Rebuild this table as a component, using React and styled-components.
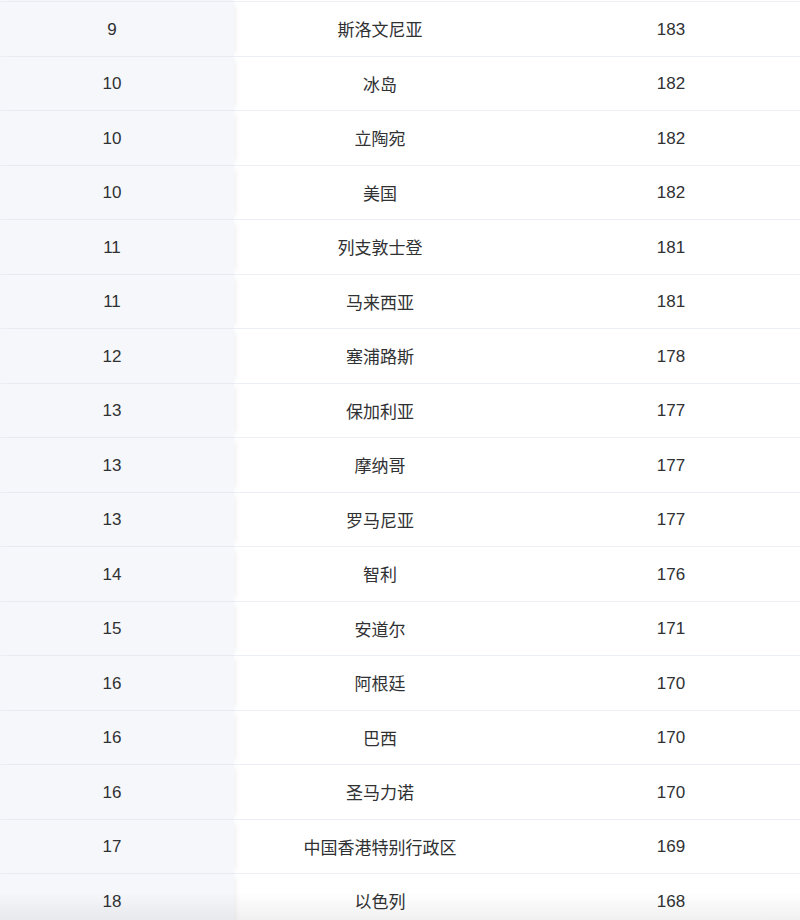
import React from "react";
import styled, { createGlobalStyle } from "styled-components";

const Global = createGlobalStyle`
  * { box-sizing: border-box; margin: 0; padding: 0; }
  html, body { background: #fff; overflow: hidden; }
  body { font-family: "Liberation Sans", "Noto Sans CJK SC", sans-serif; }
`;

const rows = [
  [9, "斯洛文尼亚", 183],
  [10, "冰岛", 182],
  [10, "立陶宛", 182],
  [10, "美国", 182],
  [11, "列支敦士登", 181],
  [11, "马来西亚", 181],
  [12, "塞浦路斯", 178],
  [13, "保加利亚", 177],
  [13, "摩纳哥", 177],
  [13, "罗马尼亚", 177],
  [14, "智利", 176],
  [15, "安道尔", 171],
  [16, "阿根廷", 170],
  [16, "巴西", 170],
  [16, "圣马力诺", 170],
  [17, "中国香港特别行政区", 169],
  [18, "以色列", 168],
];

const Wrap = styled.div`
  position: relative;
  width: 800px;
  height: 920px;
  overflow: hidden;
`;

const TopStrip = styled.div`
  display: grid;
  grid-template-columns: 234px 1fr;
  height: 1px;
  &::before {
    content: "";
    background: #f5f7fa;
  }
`;

const Body = styled.div`
  width: 816px;
  border-top: 1px solid #ebeef5;
`;

const Row = styled.div`
  display: grid;
  grid-template-columns: 234px 292px 290px;
  height: 54.5px;
  border-bottom: 1px solid #ebeef5;
  color: #303133;
  font-size: 17px;
`;

const Cell = styled.div`
  display: flex;
  align-items: center;
  justify-content: center;
  background: ${(p) => (p.$fixed ? "#f5f7fa" : "#fff")};
  padding-right: ${(p) => (p.$fixed ? "10px" : "0")};
  padding-top: ${(p) => (p.$num ? "2px" : "0")};
  position: relative;
  z-index: ${(p) => (p.$fixed ? 1 : 0)};
  box-shadow: ${(p) => (p.$fixed ? "4px 0 6px -3px rgba(0,0,0,0.08)" : "none")};
`;

const BottomShade = styled.div`
  position: absolute;
  left: 0;
  right: 0;
  bottom: 0;
  height: 28px;
  background: linear-gradient(to bottom, rgba(0, 0, 0, 0), rgba(0, 0, 0, 0.06));
  pointer-events: none;
  z-index: 2;
`;

export default function App() {
  return (
    <>
      <Global />
      <Wrap>
        <TopStrip />
        <Body>
          {rows.map(([rank, name, score], i) => (
            <Row key={i}>
              <Cell $fixed $num>{rank}</Cell>
              <Cell>{name}</Cell>
              <Cell $num>{score}</Cell>
            </Row>
          ))}
        </Body>
        <BottomShade />
      </Wrap>
    </>
  );
}
